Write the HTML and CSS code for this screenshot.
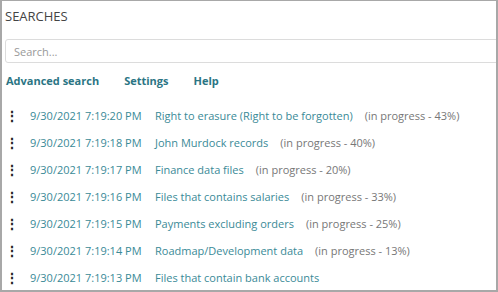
FILE: index.html
```html
<!DOCTYPE html>
<html lang="en">
<head>
  <meta charset="UTF-8">
  <title>Searches</title>
  <link rel="stylesheet" href="styles.css">
</head>
<body>

<div class="panel">
  <h1 class="title">SEARCHES</h1>

  <input class="search" type="text" placeholder="Search...">

  <nav class="links">
    <a href="#">Advanced search</a>
    <a href="#">Settings</a>
    <a href="#">Help</a>
  </nav>

  <ul class="list">
    <li>
      <span class="menu">&#8942;</span>
      <a class="date" href="#">9/30/2021 7:19:20 PM</a>
      <a class="name" href="#">Right to erasure (Right to be forgotten)</a>
      <span class="status">(in progress - 43%)</span>
    </li>
    <li>
      <span class="menu">&#8942;</span>
      <a class="date" href="#">9/30/2021 7:19:18 PM</a>
      <a class="name" href="#">John Murdock records</a>
      <span class="status">(in progress - 40%)</span>
    </li>
    <li>
      <span class="menu">&#8942;</span>
      <a class="date" href="#">9/30/2021 7:19:17 PM</a>
      <a class="name" href="#">Finance data files</a>
      <span class="status">(in progress - 20%)</span>
    </li>
    <li>
      <span class="menu">&#8942;</span>
      <a class="date" href="#">9/30/2021 7:19:16 PM</a>
      <a class="name" href="#">Files that contains salaries</a>
      <span class="status">(in progress - 33%)</span>
    </li>
    <li>
      <span class="menu">&#8942;</span>
      <a class="date" href="#">9/30/2021 7:19:15 PM</a>
      <a class="name" href="#">Payments excluding orders</a>
      <span class="status">(in progress - 25%)</span>
    </li>
    <li>
      <span class="menu">&#8942;</span>
      <a class="date" href="#">9/30/2021 7:19:14 PM</a>
      <a class="name" href="#">Roadmap/Development data</a>
      <span class="status">(in progress - 13%)</span>
    </li>
    <li>
      <span class="menu">&#8942;</span>
      <a class="date" href="#">9/30/2021 7:19:13 PM</a>
      <a class="name" href="#">Files that contain bank accounts</a>
    </li>
  </ul>
</div>

</body>
</html>
```

FILE: styles.css
```css
body {
  margin: 0;
  padding: 0;
  background: #fff;
  font-family: "Open Sans", Arial, sans-serif;
}

.panel {
  width: 498px;
  height: 292px;
  box-sizing: border-box;
  border: 1px solid #a8a8a8;
  border-width: 1px 2px 2px 2px;
  overflow: hidden;
  padding: 0 0 0 3px;
}

.title {
  margin: 0;
  padding-top: 6px;
  height: 30px;
  box-sizing: border-box;
  font-size: 13px;
  font-weight: normal;
  color: #444;
  line-height: 18px;
}

.search {
  display: block;
  box-sizing: border-box;
  width: 510px;
  height: 24px;
  margin: 8px 0 0 0;
  padding: 0 8px;
  border: 1px solid #dcdcdc;
  border-radius: 3px;
  font-family: inherit;
  font-size: 11px;
  color: #444;
}

.search::placeholder {
  color: #999;
}

.links {
  display: flex;
  gap: 25px;
  margin-top: 10px;
  padding-left: 1px;
}

.links a {
  font-size: 11px;
  font-weight: bold;
  color: #2b7584;
  text-decoration: none;
  line-height: 15px;
}

.list {
  list-style: none;
  margin: 14px 0 0 0;
  padding: 0;
}

.list li {
  display: flex;
  align-items: center;
  height: 27px;
  font-size: 11px;
}

.menu {
  width: 25px;
  color: #222;
  font-weight: bold;
  font-size: 14px;
}

.date {
  width: 125px;
  color: #3a8a97;
  text-decoration: none;
}

.name {
  color: #3a8a97;
  text-decoration: none;
  margin-right: 12px;
}

.status {
  color: #777;
}
```
